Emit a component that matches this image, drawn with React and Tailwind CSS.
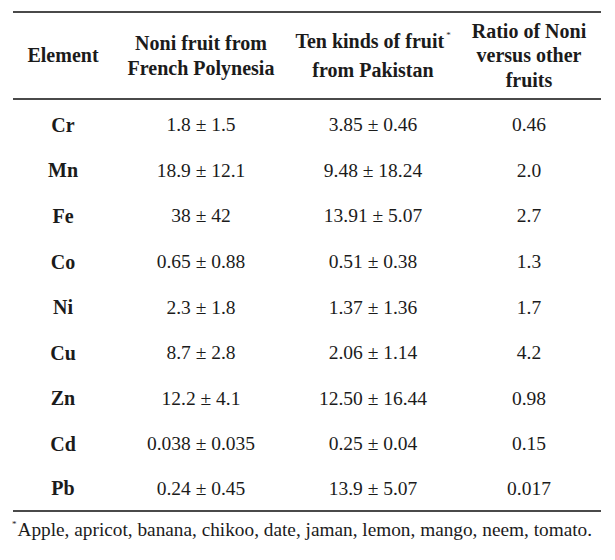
const rows = [
  ["Cr", "1.8 ± 1.5", "3.85 ± 0.46", "0.46"],
  ["Mn", "18.9 ± 12.1", "9.48 ± 18.24", "2.0"],
  ["Fe", "38 ± 42", "13.91 ± 5.07", "2.7"],
  ["Co", "0.65 ± 0.88", "0.51 ± 0.38", "1.3"],
  ["Ni", "2.3 ± 1.8", "1.37 ± 1.36", "1.7"],
  ["Cu", "8.7 ± 2.8", "2.06 ± 1.14", "4.2"],
  ["Zn", "12.2 ± 4.1", "12.50 ± 16.44", "0.98"],
  ["Cd", "0.038 ± 0.035", "0.25 ± 0.04", "0.15"],
  ["Pb", "0.24 ± 0.45", "13.9 ± 5.07", "0.017"],
];

function Row({ cells, last }) {
  return (
    <div
      className={`grid grid-cols-[100px_176px_168px_144px] items-center text-center ${
        last ? "h-[43px]" : "h-[45.6px]"
      }`}
    >
      <div className="font-bold text-[20px]">{cells[0]}</div>
      <div className="text-[19.5px]">{cells[1]}</div>
      <div className="text-[19.5px]">{cells[2]}</div>
      <div className="text-[19.5px]">{cells[3]}</div>
    </div>
  );
}

export default function App() {
  return (
    <div className="w-[615px] h-[560px] bg-white pt-[11px] pl-[13px] font-[family-name:Liberation_Serif,Times_New_Roman,serif] text-[#1b1b1b]">
      <div className="w-[588px]">
        <div className="grid h-[89px] grid-cols-[100px_176px_168px_144px] items-center border-y-2 border-[#4a4a4a] text-center text-[20px] font-bold leading-[24.5px]">
          <div>Element</div>
          <div>
            Noni fruit from
            <br />
            French Polynesia
          </div>
          <div>
            Ten kinds of fruit
            <span className="relative -top-[10px] ml-[2px] text-[9px] font-normal">*</span>
            <br />
            from Pakistan
          </div>
          <div>
            Ratio of Noni
            <br />
            versus other
            <br />
            fruits
          </div>
        </div>

        <div className="border-b-2 border-[#4a4a4a] pt-[2px]">
          {rows.map((r, i) => (
            <Row key={r[0]} cells={r} last={i === rows.length - 1} />
          ))}
        </div>

        <p className="mt-[6px] -ml-px text-[19.3px] leading-[24px]">
          <span className="relative -top-[9px] mr-[1px] text-[9px]">*</span>
          Apple, apricot, banana, chikoo, date, jaman, lemon, mango, neem, tomato.
        </p>
      </div>
    </div>
  );
}
